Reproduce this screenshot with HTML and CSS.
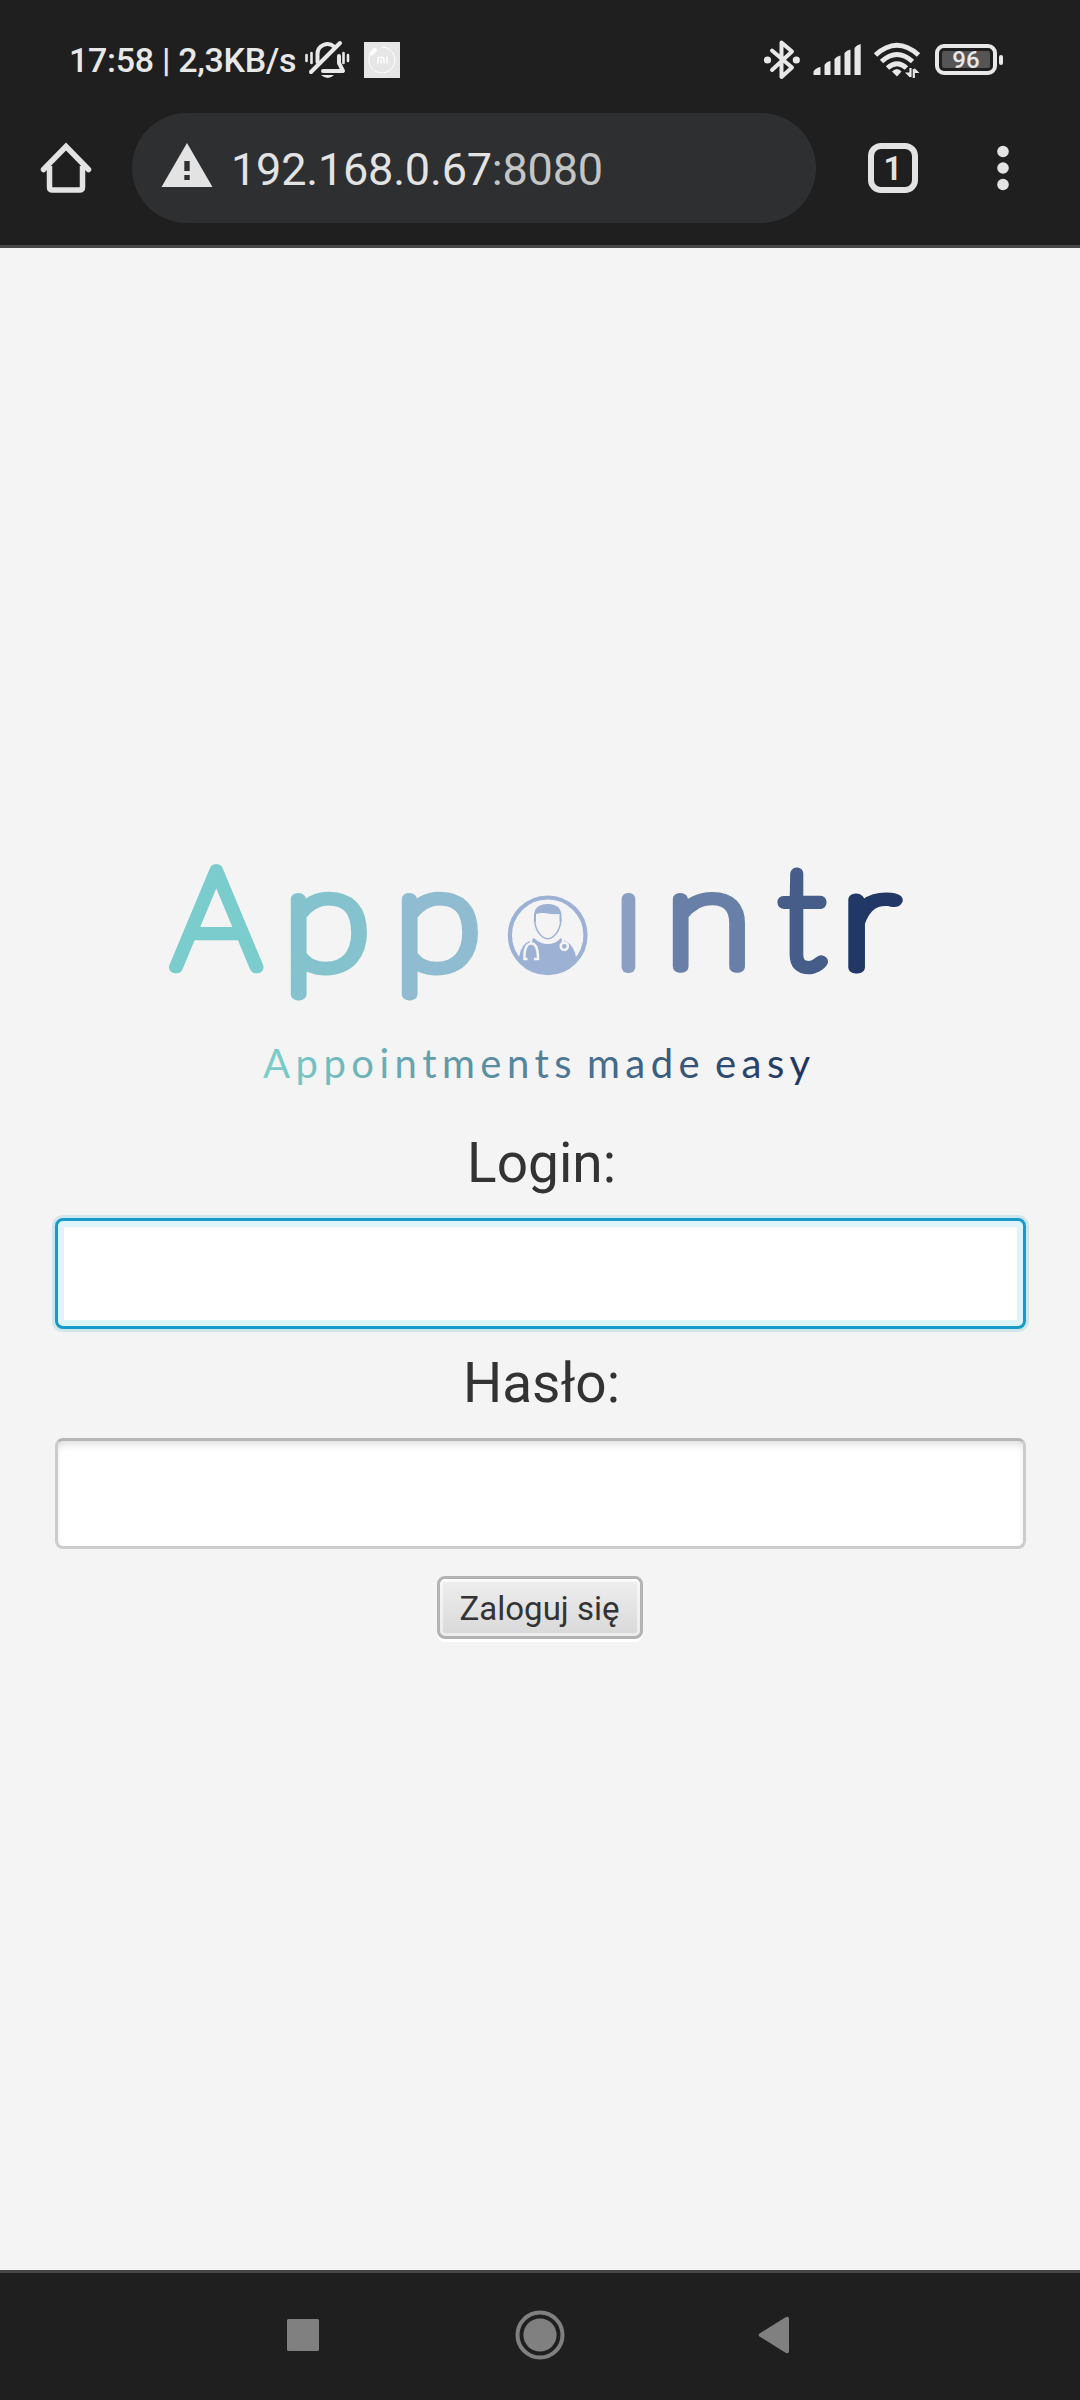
FILE: index.html
```html
<!DOCTYPE html>
<html lang="pl">
<head>
<meta charset="utf-8">
<title>Appointr</title>
<link rel="stylesheet" href="styles.css">
</head>
<body>
<div class="screen">
  <header class="top">
    <div class="status">
      <span class="clock">17:58 | 2,3KB/s</span>
      <svg class="bell" width="46" height="40" viewBox="304 40 46 40" fill="none" stroke="#e8e8e8" stroke-width="4" stroke-linecap="round" stroke-linejoin="round">
        <path d="M317.500 62V54A10 10 0 0 1 334 46.500M339 56V63L343 71H323"/>
        <path d="M311 72 340 43"/>
        <path d="M306.500 55v6M311.500 53v10M343.500 53v10M348 55v6" stroke-width="2.600"/>
        <path d="M321 75h13q-6 6-13 0z" fill="#e8e8e8" stroke="none"/>
      </svg>
      <svg class="mi" width="36" height="36" viewBox="0 0 36 36" fill="none">
        <path fill="#e6e6e6" d="M0 0h36v36H0z"/>
        <path d="M9 8.500A13 13 0 1 0 18 5" stroke="#fff"/>
        <path d="M7.500 11.500 11 8" stroke="#fff" stroke-width="4" stroke-linecap="round"/>
        <path d="M14 21.500V15.500H18.500Q20 15.500 20 17V21.500M17 17.500v4M23 14.500v7" stroke="#fff" stroke-width="1.500"/>
      </svg>
      <span class="spacer"></span>
      <svg class="bt" width="38" height="42" viewBox="763 38 38 42" fill="none" stroke="#e8e8e8" stroke-width="4" stroke-linejoin="round" stroke-linecap="round">
        <path d="M772 49.500 792 66.500 781.500 76V41.500L792 50.500 772 69"/>
        <circle cx="767.500" cy="59" r="3.600" fill="#e8e8e8" stroke="none"/><circle cx="796.300" cy="59" r="3.600" fill="#e8e8e8" stroke="none"/>
      </svg>
      <svg class="signal" width="48" height="32" viewBox="813 44 48 32" fill="#e8e8e8">
        <path d="M813.500 71.500Q816 67.500 820.500 67V75H813.500zM824.500 65Q826.500 61.500 830.500 61V75H824.500zM834.500 59Q836.500 56 840.500 55.500V75H834.500zM844.500 53Q846.500 50 850.500 49.500V75H844.500zM854.500 48Q856.500 45 860.700 44V75H854.500z"/>
      </svg>
      <svg class="wifi" width="48" height="38" viewBox="873 41 48 38" fill="none" stroke="#e8e8e8" stroke-width="5">
        <path d="M875.500 55Q897 35.500 918.500 55M881.500 61.500Q897 47.500 912.500 61.500M887.500 68Q897 59.500 906.500 68"/>
        <path d="M892 71.500Q897 66.500 901.500 71.500L897 76.500z" fill="#e8e8e8" stroke="none"/>
        <path d="M910.500 68V77M913.800 78V69" stroke-width="2.200"/>
        <path d="M905 72.500h5v5zM919.500 73h-5v-5z" fill="#e8e8e8" stroke="none"/>
      </svg>
      <span class="battery"><span class="level">96</span></span><span class="nub"></span>
    </div>
    <div class="toolbar">
      <svg class="home" width="52" height="52" viewBox="40 142 52 52" fill="none" stroke="#e3e3e3" stroke-width="5.500">
        <path d="M49.500 166V187Q49.500 190 52.500 190H79.500Q82.500 190 82.500 187V166"/>
        <path d="M43.500 169.500 66 146.500 88.500 169.500" stroke-linecap="round"/>
      </svg>
      <div class="address">
        <svg width="52" height="46" viewBox="0 0 52 46"><path fill="#e3e3e3" fill-rule="evenodd" d="M26 1 51.500 45H.5zM23.300 19v10h5.400V19zM23.300 33v5h5.400v-5z"/></svg>
        <span class="url">192.168.0.67<span class="port">:8080</span></span>
      </div>
      <span class="tabs">1</span>
      <svg class="more" width="14" height="48" viewBox="0 0 14 48" fill="#e3e3e3"><circle cx="7" cy="7.500" r="5.800"/><circle cx="7" cy="24" r="5.800"/><circle cx="7" cy="40.500" r="5.800"/></svg>
    </div>
  </header>

  <main class="page">
    <svg class="logo" width="780" height="290" viewBox="150 800 780 290">
      <defs>
        <linearGradient id="tag" gradientUnits="userSpaceOnUse" x1="263" y1="0" x2="811" y2="0">
          <stop offset="0" stop-color="#7ccfcb"/><stop offset=".5" stop-color="#528099"/><stop offset="1" stop-color="#1f3260"/>
        </linearGradient>
      </defs>
      <g class="wordmark">
        <text transform="translate(172 967)" fill="#7bcccc" stroke="#7bcccc">A</text>
        <text transform="translate(283 968) scale(1.150 1.020)" fill="#84c3ce" stroke="#84c3ce">p</text>
        <text transform="translate(394 968) scale(1.150 1.020)" fill="#8fbcd1" stroke="#8fbcd1">p</text>
        <text transform="translate(614 967)" fill="#8c9fc3" stroke="#8c9fc3">ı</text>
        <text transform="translate(665 967) scale(1.150 1)" fill="#687fa7" stroke="#687fa7">n</text>
        <text transform="translate(779 967)" fill="#455d88" stroke="#455d88">t</text>
        <text transform="translate(840 967) scale(1.220 1)" fill="#213765" stroke="#213765">r</text>
      </g>
      <g class="doctor">
        <circle cx="547.700" cy="935.300" r="37.800" fill="none" stroke="#9db1d5" stroke-width="4.200"/>
        <path fill="#9db1d5" d="M519 957Q521 944 530.500 940.500L534 938Q540 944 547.700 944T561 938L565 941Q574 945 576 957L583 951Q573 974 547.700 974T512 951z"/>
        <path fill="#9db1d5" d="M534.500 922Q531 904 547.700 904T561 922L559.500 922V914Q554 914.500 547.700 913.500T536 914V922z"/>
        <path d="M534.500 919C535 931 542 938.700 547.700 938.700S560.500 931 561 919" fill="none" stroke="#9db1d5" stroke-width="1.500"/>
        <path d="M531 938v5M527.500 959h-3Q524 944 531 943.500T538 959h-4M563 937v5" fill="none" stroke="#f4f4f4" stroke-width="2.500"/>
        <circle cx="564.300" cy="946.300" r="3.600" fill="#9db1d5" stroke="#f4f4f4" stroke-width="2.500"/>
      </g>
      <text class="tagline" x="263" y="1077.500" textLength="547" fill="url(#tag)">Appointments made easy</text>
    </svg>
    <form class="login">
      <label for="login">Login:</label>
      <input id="login" class="field active" type="text">
      <label for="password">Hasło:</label>
      <input id="password" class="field" type="password">
      <button type="button">Zaloguj się</button>
    </form>
  </main>

  <nav class="nav">
    <svg width="34" height="34" viewBox="0 0 34 34"><rect x="1" y="1" width="32" height="32" rx="1.500"/></svg>
    <svg width="50" height="50" viewBox="0 0 50 50"><circle cx="25" cy="25" r="22.500" class="ring"/><circle cx="25" cy="25" r="16.600"/></svg>
    <svg width="34" height="40" viewBox="0 0 34 40"><path d="M2.500 18.500 29 2Q32 1 32 4V36Q32 39 29 38L2.500 21.500Q.8 20 2.500 18.500z"/></svg>
  </nav>
</div>
</body>
</html>
```
FILE: styles.css
```css
* { box-sizing: border-box; }
body { margin: 0; font-family: Roboto, sans-serif; background: #f4f4f4; }
svg { display: block; flex: none; }
.screen { display: flex; flex-direction: column; width: 1080px; height: 2400px; }

.top { height: 248px; background: #1f1f1f; border-bottom: 3px solid #474747; }
.status { display: flex; align-items: center; height: 113px; padding: 6px 77px 0 69px; color: #e8e8e8; }
.clock { width: 235px; font-size: 34px; font-weight: 500; line-height: 40px; white-space: nowrap; letter-spacing: -.3px; }
.mi { margin-left: 14px; }
.spacer { flex: 1; }
.signal { margin-left: 12px; }
.wifi { margin-left: 12px; }
.battery { width: 62px; height: 31px; margin-left: 14px; padding: 3px; border: 4px solid #e8e8e8; border-radius: 9px; }
.level { display: block; height: 17px; border-radius: 2px; background: #555; font-size: 24px; font-weight: 500; line-height: 19px; text-align: center; }
.nub { width: 4px; height: 10px; margin-left: 2px; border-radius: 2px; background: #e8e8e8; }

.toolbar { display: flex; align-items: center; height: 110px; padding-left: 40px; }
.address { display: flex; align-items: center; width: 684px; height: 110px; margin-left: 40px; padding-left: 29px; border-radius: 55px; background: #2e2f31; }
.address svg { margin-top: -6px; }
.url { margin-left: 18px; padding-top: 4px; font-size: 45px; line-height: 56px; color: #e3e3e3; letter-spacing: -.2px; }
.port { color: #c4c6c5; }
.tabs { width: 50px; height: 50px; margin-left: 52px; border: 6px solid #e3e3e3; border-radius: 13px; color: #e3e3e3; font-size: 33px; font-weight: 600; line-height: 40px; text-align: center; }
.more { margin-left: 78px; }

.page { display: flex; flex: 1; flex-direction: column; align-items: center; padding-top: 552px; }
.wordmark { font: 100 139px Lato, sans-serif; stroke-width: 12px; stroke-linejoin: round; stroke-linecap: round; }
.tagline { font: 400 40px Lato, sans-serif; word-spacing: -6px; }
.login { display: flex; flex-direction: column; align-items: center; width: 971px; margin-top: 40px; }
label { margin-bottom: 22px; padding-left: 3px; font-size: 55px; line-height: 66px; color: #333; }
.field { width: 971px; height: 111px; margin: 0 0 21px; padding: 0 20px; border: 3px solid #ccc; border-top-color: #b5b5b5; border-radius: 8px; outline: 0; background: #fff; box-shadow: inset 0 6px 8px -3px #ddd; font: 50px Roboto, sans-serif; }
.active { border-color: #189bc8; box-shadow: 0 0 0 3px #cfe6ec, inset 0 0 0 6px #dff4f9, inset 0 9px 5px -3px #f3f3f3; }
button { width: 206px; height: 63px; margin-top: 6px; padding: 2px 1px 0 0; border: 3px solid #b3b3b3; border-radius: 8px; background: linear-gradient(#efefef, #d8d8d8); box-shadow: inset 0 2px 0 #fff, inset 0 0 0 3px #ffffff80, 0 3px 0 #fff; color: #333; font: 33px/50px Roboto, sans-serif; }

.nav { display: flex; align-items: center; height: 130px; padding: 0 0 3px 286px; border-top: 3px solid #464847; background: #1f1f1f; fill: #808080; }
.nav svg + svg { margin-left: 195px; }
.nav svg:last-child { margin-left: 192px; }
.ring { fill: none; stroke: #808080; stroke-width: 4px; }
```
